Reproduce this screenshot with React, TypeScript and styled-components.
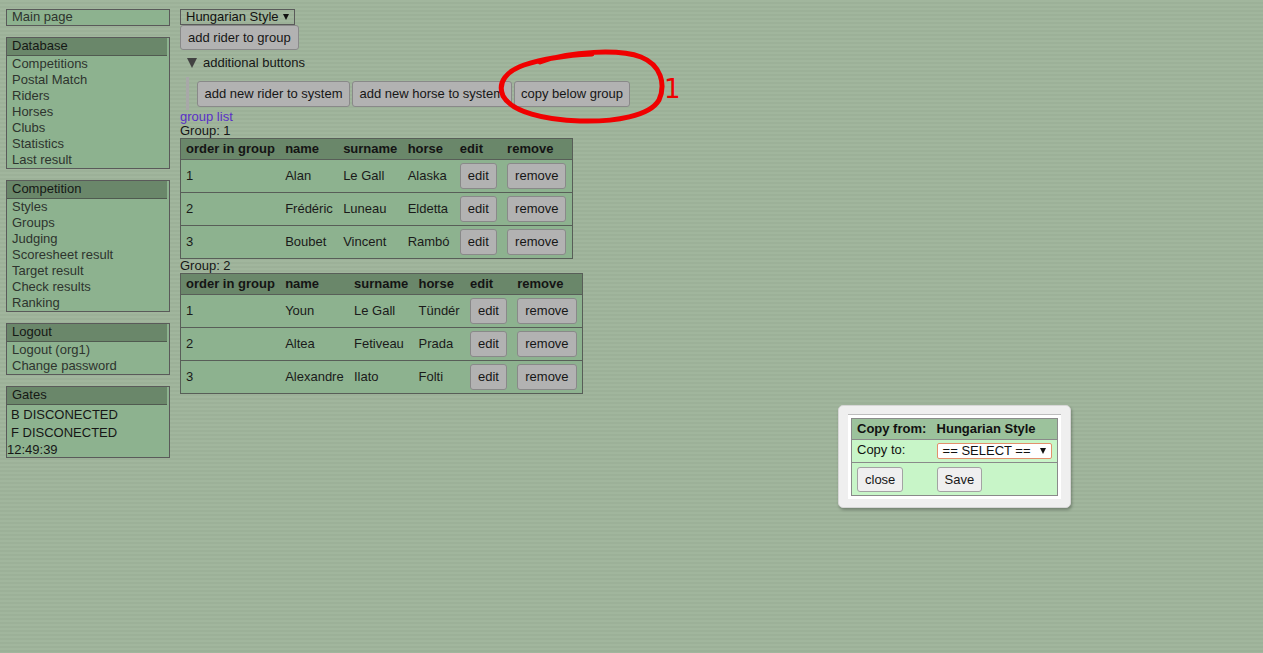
import React from 'react';
import styled, { createGlobalStyle } from 'styled-components';

const GlobalStyle = createGlobalStyle`
  html, body {
    margin: 0;
    padding: 0;
  }
  body {
    background-color: #9fb49b;
    background-image: repeating-linear-gradient(180deg, rgba(255,255,255,0.025) 0 2px, rgba(0,0,0,0.02) 2px 4px);
    font-family: "Liberation Sans", Arial, sans-serif;
    font-size: 13px;
    color: #1c1c1c;
  }
  * { box-sizing: border-box; }
`;

const Page = styled.div`
  position: relative;
  display: flex;
  align-items: flex-start;
  gap: 10px;
  padding: 9px 0 0 6px;
  min-height: 653px;
`;

const Sidebar = styled.nav`
  width: 164px;
  display: flex;
  flex-direction: column;
  gap: 11px;
`;

const Box = styled.div`
  border: 1px solid #5a5a5a;
  background: #8db28f;
`;

const SingleLink = styled.div`
  line-height: 13px;
  padding: 0 0 2px 5px;
  color: #2e342e;
`;

const BoxHeader = styled.div`
  background: #6a876a;
  border-bottom: 1px solid #505a50;
  margin-right: 2px;
  line-height: 15px;
  padding: 0 0 2px 5px;
  color: #151815;
`;

const Item = styled.div`
  line-height: 16px;
  padding-left: 5px;
  color: #2e342e;
`;

const GateList = styled.div`
  padding-top: 1px;
`;

const GateItem = styled.div`
  line-height: 18px;
  padding-left: 4px;
  color: #161616;
`;

const Clock = styled.div`
  line-height: 15px;
  color: #161616;
`;

const Main = styled.main`
  display: flex;
  flex-direction: column;
  align-items: flex-start;
`;

const SelectBox = styled.div<{ $white?: boolean }>`
  display: inline-flex;
  align-items: center;
  gap: 4px;
  height: 16px;
  line-height: 14px;
  padding: 0 5px 0 5px;
  border: 1px solid ${p => (p.$white ? '#e2906c' : '#5a5a5a')};
  border-radius: ${p => (p.$white ? '2px' : '0')};
  background: ${p => (p.$white ? '#ffffff' : 'transparent')};
  color: #111;
  width: ${p => (p.$white ? '115px' : 'auto')};
  justify-content: space-between;
`;

const Caret = styled.span`
  width: 0;
  height: 0;
  border-left: 3px solid transparent;
  border-right: 3px solid transparent;
  border-top: 6px solid #111;
`;

const Button = styled.button<{ $light?: boolean }>`
  font-family: "Liberation Sans", Arial, sans-serif;
  font-size: 13px;
  height: ${p => (p.$light ? '25px' : '26px')};
  padding: 0 7px;
  border: 1px solid ${p => (p.$light ? '#a3a3a3' : '#898989')};
  border-radius: 3px;
  background: ${p => (p.$light ? '#efefef' : '#b2b2b2')};
  color: #161616;
  white-space: nowrap;
  line-height: 14px;
  cursor: pointer;
  vertical-align: top;
`;

const TopButton = styled(Button)`
  height: 25px;
`;

const ExtraButton = styled(Button)`
  padding: 0 6.5px;
`;

const Summary = styled.div`
  display: flex;
  align-items: center;
  gap: 6px;
  margin: 5px 0 0 7px;
  line-height: 16px;
  color: #161616;
`;

const DisclosureTriangle = styled.span`
  width: 0;
  height: 0;
  border-left: 5.5px solid transparent;
  border-right: 5.5px solid transparent;
  border-top: 10px solid #424242;
`;

const ExtraButtons = styled.div`
  display: flex;
  gap: 2px;
  margin: 6px 0 0 6px;
  padding: 4px 0 3px 8px;
  border-left: 3px solid #a8a8a8;
`;

const GroupListLink = styled.a`
  color: #5a30c8;
  text-decoration: none;
  line-height: 15px;
  margin-top: -1px;
`;

const GroupLabel = styled.div`
  line-height: 14px;
  color: #161616;
`;

const Table = styled.table`
  border-collapse: collapse;
  border: 1px solid #585e58;
  background: #8db28f;
  color: #1a1a1a;
`;

const Th = styled.th`
  background: #6a876a;
  text-align: left;
  font-weight: bold;
  padding: 2px 5.3px 2px 5px;
  line-height: 16px;
  white-space: nowrap;
  color: #141414;
`;

const Td = styled.td`
  border-top: 1px solid #585e58;
  padding: 3px 5.3px 3px 5px;
  line-height: 26px;
  white-space: nowrap;
  vertical-align: top;
`;

const Dialog = styled.div`
  position: absolute;
  left: 838px;
  top: 405px;
  width: 233px;
  height: 103px;
  padding: 8px 9px 9px 9px;
  background: #efefef;
  border: 1px solid #d6d6d6;
  border-radius: 5px;
  box-shadow: 1px 2px 3px rgba(0, 0, 0, 0.28);
`;

const DialogInner = styled.div`
  background: #ffffff;
  border-top: 1px solid #bdbdbd;
  padding: 3px;
`;

const DialogTable = styled.table`
  border-collapse: collapse;
  border: 1px solid #8a8a8a;
  width: 207px;
  color: #111;
`;

const DialogTh = styled.th`
  background: #9cc29c;
  text-align: left;
  font-weight: bold;
  padding: 2px 5px 2px 5px;
  line-height: 16px;
  white-space: nowrap;
`;

const DialogTd = styled.td<{ $pad?: string }>`
  background: #c8f5c8;
  border-top: 1px solid #8a8a8a;
  padding: ${p => p.$pad || '2px 5px'};
  line-height: 15px;
  vertical-align: top;
  white-space: nowrap;
`;

const Annotation = styled.svg`
  position: absolute;
  left: 0;
  top: 0;
  pointer-events: none;
`;

const AnnotationNumber = styled.div`
  position: absolute;
  left: 664px;
  top: 76px;
  font-family: "DejaVu Sans", sans-serif;
  font-size: 26px;
  line-height: 26px;
  color: #f00000;
`;

type Rider = { name: string; surname: string; horse: string };

const groups: { id: number; riders: Rider[] }[] = [
  {
    id: 1,
    riders: [
      { name: 'Alan', surname: 'Le Gall', horse: 'Alaska' },
      { name: 'Frédéric', surname: 'Luneau', horse: 'Eldetta' },
      { name: 'Boubet', surname: 'Vincent', horse: 'Rambó' },
    ],
  },
  {
    id: 2,
    riders: [
      { name: 'Youn', surname: 'Le Gall', horse: 'Tündér' },
      { name: 'Altea', surname: 'Fetiveau', horse: 'Prada' },
      { name: 'Alexandre', surname: 'Ilato', horse: 'Folti' },
    ],
  },
];

const nav = [
  {
    title: 'Database',
    items: ['Competitions', 'Postal Match', 'Riders', 'Horses', 'Clubs', 'Statistics', 'Last result'],
  },
  {
    title: 'Competition',
    items: ['Styles', 'Groups', 'Judging', 'Scoresheet result', 'Target result', 'Check results', 'Ranking'],
  },
  { title: 'Logout', items: ['Logout (org1)', 'Change password'] },
];

export default function App() {
  return (
    <>
      <GlobalStyle />
      <Page>
        <Sidebar>
          <Box>
            <SingleLink>Main page</SingleLink>
          </Box>
          {nav.map(section => (
            <Box key={section.title}>
              <BoxHeader>{section.title}</BoxHeader>
              {section.items.map(i => (
                <Item key={i}>{i}</Item>
              ))}
            </Box>
          ))}
          <Box>
            <BoxHeader>Gates</BoxHeader>
            <GateList>
              <GateItem>B DISCONECTED</GateItem>
              <GateItem>F DISCONECTED</GateItem>
              <Clock>12:49:39</Clock>
            </GateList>
          </Box>
        </Sidebar>

        <Main>
          <SelectBox>
            <span>Hungarian Style</span>
            <Caret />
          </SelectBox>
          <TopButton>add rider to group</TopButton>
          <Summary>
            <DisclosureTriangle />
            <span>additional buttons</span>
          </Summary>
          <ExtraButtons>
            <ExtraButton>add new rider to system</ExtraButton>
            <ExtraButton>add new horse to system</ExtraButton>
            <ExtraButton>copy below group</ExtraButton>
          </ExtraButtons>
          <GroupListLink href="#">group list</GroupListLink>
          {groups.map(g => (
            <React.Fragment key={g.id}>
              <GroupLabel>Group: {g.id}</GroupLabel>
              <Table>
                <thead>
                  <tr>
                    <Th>order in group</Th>
                    <Th>name</Th>
                    <Th>surname</Th>
                    <Th>horse</Th>
                    <Th>edit</Th>
                    <Th>remove</Th>
                  </tr>
                </thead>
                <tbody>
                  {g.riders.map((r, idx) => (
                    <tr key={r.name}>
                      <Td>{idx + 1}</Td>
                      <Td>{r.name}</Td>
                      <Td>{r.surname}</Td>
                      <Td>{r.horse}</Td>
                      <Td>
                        <Button>edit</Button>
                      </Td>
                      <Td>
                        <Button>remove</Button>
                      </Td>
                    </tr>
                  ))}
                </tbody>
              </Table>
            </React.Fragment>
          ))}
        </Main>

        <Annotation width="1263" height="653" viewBox="0 0 1263 653">
          <path
            d="M 540 62 C 570 51, 620 49, 641 57 C 661 65, 666 84, 659 100 C 650 116, 615 122, 580 121 C 545 120, 512 112, 503 96 C 497 82, 507 71, 524 65 C 545 58, 570 55, 592 54"
            fill="none"
            stroke="#f00000"
            strokeWidth="5"
            strokeLinecap="round"
            strokeLinejoin="round"
          />
        </Annotation>
        <AnnotationNumber>1</AnnotationNumber>

        <Dialog>
          <DialogInner>
            <DialogTable>
              <thead>
                <tr>
                  <DialogTh>Copy from:</DialogTh>
                  <DialogTh>Hungarian Style</DialogTh>
                </tr>
              </thead>
              <tbody>
                <tr>
                  <DialogTd $pad="2px 5px 3px 5px">Copy to:</DialogTd>
                  <DialogTd $pad="3px 5px 3px 5px">
                    <SelectBox $white>
                      <span>== SELECT ==</span>
                      <Caret />
                    </SelectBox>
                  </DialogTd>
                </tr>
                <tr>
                  <DialogTd $pad="4px 5px 3px 5px">
                    <Button $light>close</Button>
                  </DialogTd>
                  <DialogTd $pad="4px 5px 3px 5px">
                    <Button $light>Save</Button>
                  </DialogTd>
                </tr>
              </tbody>
            </DialogTable>
          </DialogInner>
        </Dialog>
      </Page>
    </>
  );
}
